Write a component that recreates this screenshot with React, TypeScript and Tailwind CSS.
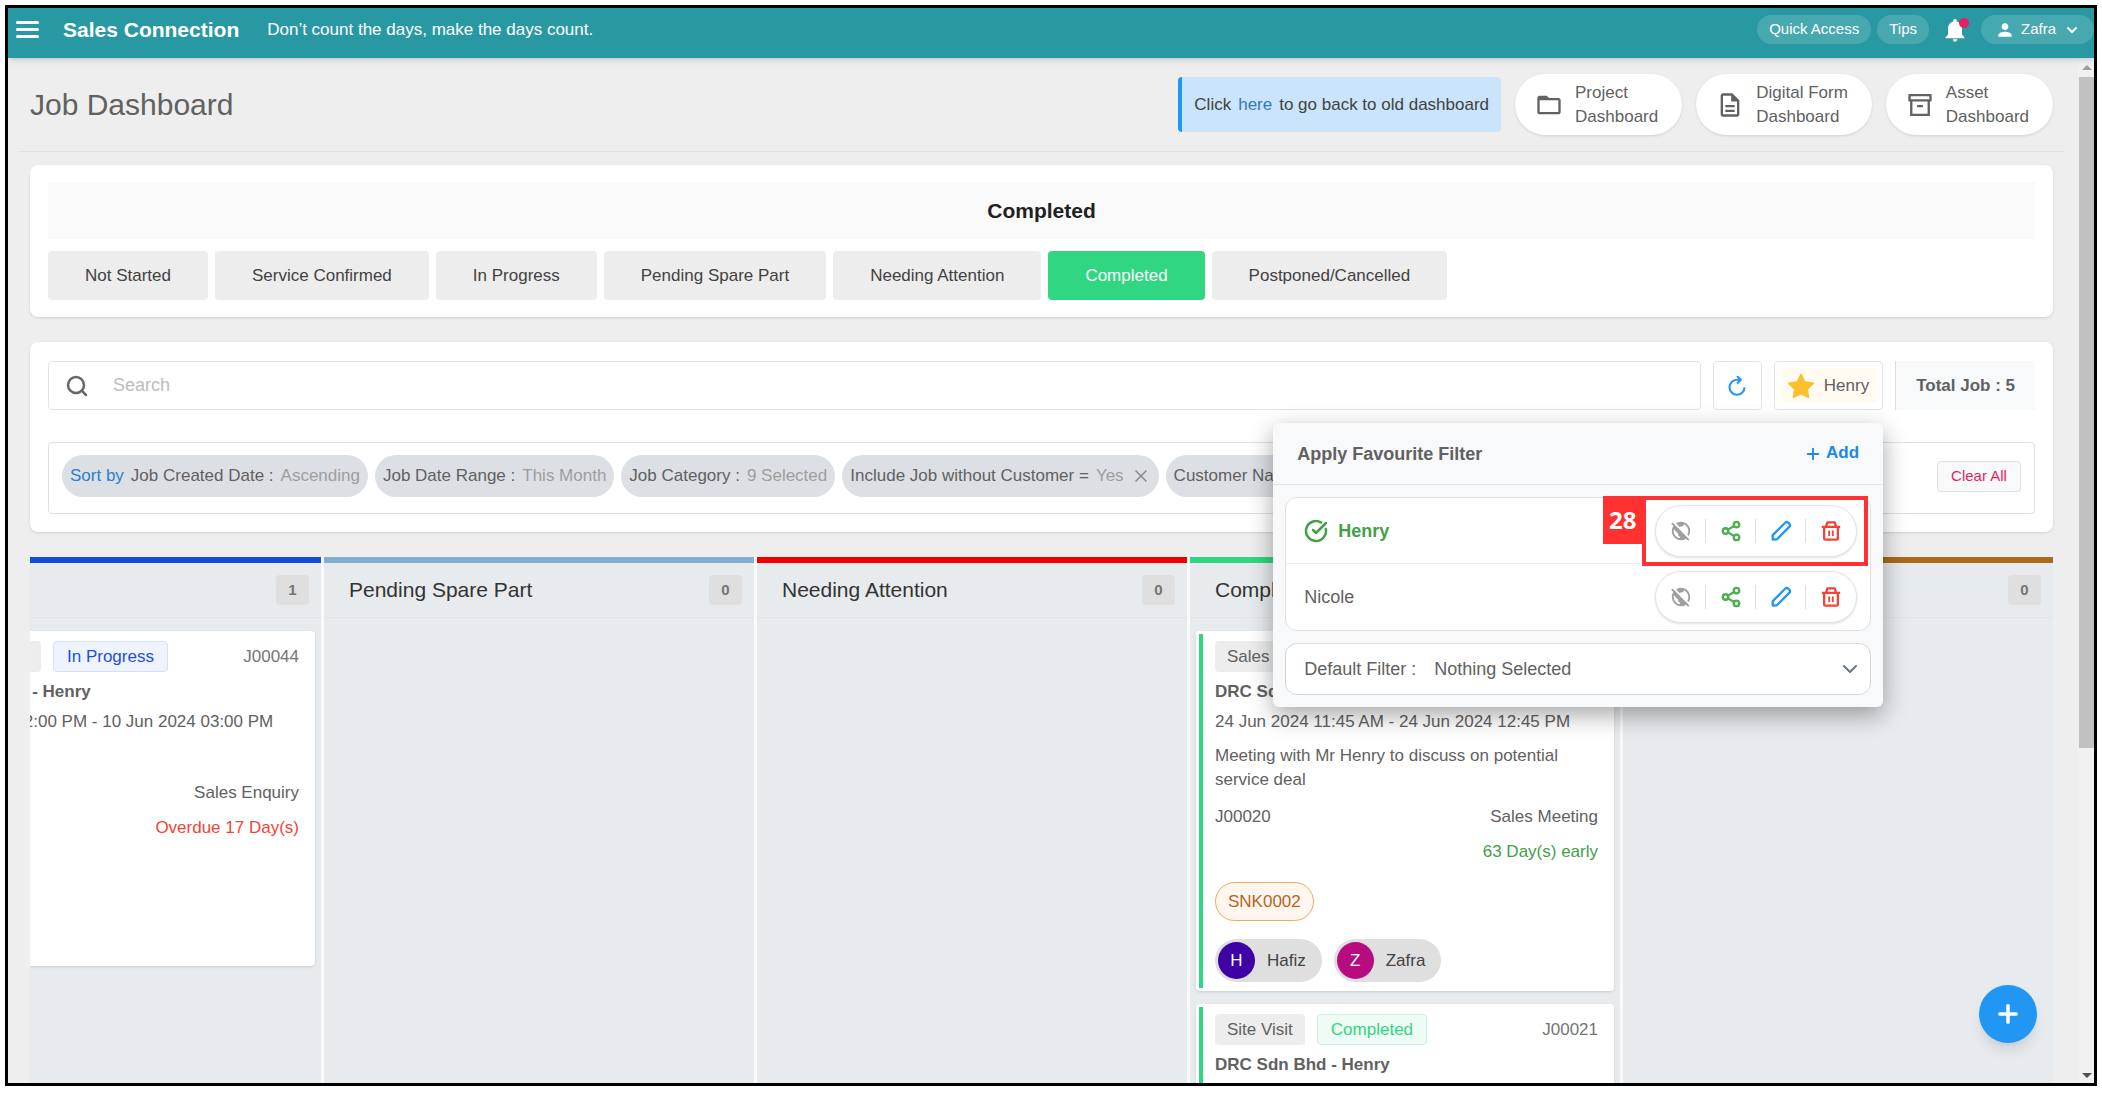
import type { ReactNode } from "react";
import { BsStarFill } from "react-icons/bs";
import {
  MdFolderOpen,
  MdNotifications,
  MdOutlineDescription,
  MdPerson,
  MdPublicOff,
} from "react-icons/md";
import { ChevronDown, CircleCheckBig, Plus, Search, Share2, X } from "lucide-react";

interface IJob {
  code: string;
  category: string;
  status: string;
  statusClass: string;
  customer: string;
  date?: string;
  description?: string;
  type?: string;
  timing?: string;
  timingClass?: string;
  asset?: string;
  staff?: { name: string; color: string }[];
  codeBelow?: boolean;
  accent?: string;
}

interface IColumn {
  name: string;
  count: number;
  bar: string;
  jobs: IJob[];
}

const STATUSES = [
  "Not Started",
  "Service Confirmed",
  "In Progress",
  "Pending Spare Part",
  "Needing Attention",
  "Completed",
  "Postponed/Cancelled",
];

const COLUMNS: IColumn[] = [
  {
    name: "",
    count: 1,
    bar: "border-[#1449dc]",
    jobs: [
      {
        code: "J00044",
        category: "",
        status: "In Progress",
        statusClass: "border-[#d6e0fb] bg-[#eef3fe] text-[#1f4fdc]",
        customer: "DRC Sdn Bhd - Henry",
        date: "10 Jun 2024 02:00 PM - 10 Jun 2024 03:00 PM",
        type: "Sales Enquiry",
        timing: "Overdue 17 Day(s)",
        timingClass: "text-[#f44336]",
      },
    ],
  },
  { name: "Pending Spare Part", count: 0, bar: "border-[#85adcf]", jobs: [] },
  { name: "Needing Attention", count: 0, bar: "border-[#f00000]", jobs: [] },
  {
    name: "Completed",
    count: 4,
    bar: "border-[#31d683]",
    jobs: [
      {
        code: "J00020",
        category: "Sales Meeting",
        status: "Completed",
        statusClass: "border-[#c9f3dd] bg-[#effbf5] text-[#31d683]",
        customer: "DRC Sdn Bhd - Henry",
        date: "24 Jun 2024 11:45 AM - 24 Jun 2024 12:45 PM",
        description: "Meeting with Mr Henry to discuss on potential service deal",
        type: "Sales Meeting",
        timing: "63 Day(s) early",
        timingClass: "text-[#43a047]",
        asset: "SNK0002",
        staff: [
          { name: "Hafiz", color: "bg-[#3f00a6]" },
          { name: "Zafra", color: "bg-[#b90b80]" },
        ],
        codeBelow: true,
        accent: "border-[#31d683]",
      },
      {
        code: "J00021",
        category: "Site Visit",
        status: "Completed",
        statusClass: "border-[#c9f3dd] bg-[#effbf5] text-[#31d683]",
        customer: "DRC Sdn Bhd - Henry",
        accent: "border-[#31d683]",
      },
    ],
  },
  { name: "", count: 0, bar: "border-[#ab6a18]", jobs: [] },
];

function ArchiveIcon() {
  return (
    <svg viewBox="0 0 24 24" className="size-7 fill-none stroke-current stroke-2">
      <path d="M3 3.500h18v4.500H3z" strokeLinejoin="round" />
      <path d="M4.500 8v12.500h15V8M9.500 13h5" strokeLinejoin="round" />
    </svg>
  );
}

function ReloadIcon() {
  return (
    <svg viewBox="0 0 24 24" className="size-5 fill-none stroke-[#2196f3] stroke-[2.500]">
      <path d="M21 13.500a9 9 0 1 1-9-9h4" />
      <path d="M12 0l4.500 4.500L12 9" />
    </svg>
  );
}

function PencilIcon() {
  return (
    <svg viewBox="0 0 24 24" className="size-[22px] fill-none stroke-[#2196f3] stroke-[2.500]">
      <path
        d="M3 21.500v-5L16.500 3a2.500 2.500 0 0 1 3.500 0l1 1a2.500 2.500 0 0 1 0 3.500L7.500 21z"
        strokeLinejoin="round"
      />
    </svg>
  );
}

function BinIcon() {
  return (
    <svg viewBox="0 0 24 24" className="size-[22px] fill-none stroke-[#f44336] stroke-[2.500]">
      <path d="M2 7.500h20M6.500 7.500l1.500-5h8l1.500 5" strokeLinejoin="round" />
      <path d="M4.500 7.500V20a1.500 1.500 0 0 0 1.500 1.500h12a1.500 1.500 0 0 0 1.500-1.500V7.500" />
      <path d="M10 11.500v6M14 11.500v6" strokeWidth="2" />
    </svg>
  );
}

function TopBar() {
  return (
    <header className="relative z-10 flex h-[50px] items-center bg-[#2899a3] pb-[7px] pl-2 text-white shadow-md">
      <button type="button" aria-label="Menu" className="flex w-[23px] flex-col gap-1">
        <span className="h-[3px] rounded-full bg-white" />
        <span className="h-[3px] rounded-full bg-white" />
        <span className="h-[3px] rounded-full bg-white" />
      </button>
      <strong className="ml-6 text-[21px]">Sales Connection</strong>
      <span className="ml-7 text-[17px]">Don’t count the days, make the days count.</span>
      <div className="ml-auto flex items-center gap-1.5 text-[15px]">
        <button type="button" className="h-[29px] rounded-full bg-white/15 px-3">
          Quick Access
        </button>
        <button type="button" className="h-[29px] rounded-full bg-white/15 px-3">
          Tips
        </button>
        <button type="button" aria-label="Notifications" className="relative mx-1.5">
          <MdNotifications className="size-7" />
          <span className="absolute right-0 top-0.5 size-2.5 rounded-full bg-[#e91e63]" />
        </button>
        <button type="button" className="flex h-[29px] items-center rounded-full bg-white/15 px-3.5">
          <MdPerson className="mr-1.5 size-5" />
          Zafra
          <ChevronDown className="ml-2 size-4" strokeWidth={3} />
        </button>
      </div>
    </header>
  );
}

function DashboardLink({ icon, label }: Readonly<{ icon: ReactNode; label: string }>) {
  return (
    <a
      href="#"
      className="flex h-[61px] items-center gap-3 rounded-full bg-white pl-5 pr-6 leading-6 shadow-sm"
    >
      {icon}
      <span>
        {label}
        <br />
        Dashboard
      </span>
    </a>
  );
}

function TitleRow() {
  return (
    <div className="flex h-[93px] items-center pl-[22px]">
      <h1 className="text-[30px]">Job Dashboard</h1>
      <div className="ml-auto flex items-center gap-3.5">
        <p className="flex h-[55px] items-center rounded-sm border-l-4 border-[#2196f3] bg-[#cae5fb] px-3 text-[#424242]">
          Click
          <a href="#" className="mx-[7px] text-[#337ab7]">
            here
          </a>
          to go back to old dashboard
        </p>
        <DashboardLink icon={<MdFolderOpen className="size-7" />} label="Project" />
        <DashboardLink icon={<MdOutlineDescription className="size-7" />} label="Digital Form" />
        <DashboardLink icon={<ArchiveIcon />} label="Asset" />
      </div>
    </div>
  );
}

function StatusPanel() {
  return (
    <section className="rounded-lg bg-white px-[18px] py-[17px] shadow">
      <h2 className="flex h-[57px] items-center justify-center bg-[#fafafa] text-[21px] font-bold text-[#212121]">
        Completed
      </h2>
      <div className="mt-3 flex gap-[7px]">
        {STATUSES.map((status) => (
          <button
            key={status}
            type="button"
            className={`h-[49px] rounded px-[37px] ${
              status === "Completed" ? "bg-[#31d683] text-white" : "bg-[#ededed] text-[#424242]"
            }`}
          >
            {status}
          </button>
        ))}
      </div>
    </section>
  );
}

function Chip({ children }: Readonly<{ children: ReactNode }>) {
  return (
    <span className="flex h-[42px] shrink-0 items-center gap-[7px] rounded-full bg-[#dce0e4] px-2">
      {children}
    </span>
  );
}

function RowAction({ label, children }: Readonly<{ label: string; children: ReactNode }>) {
  return (
    <button type="button" aria-label={label} className="flex h-6 w-[50px] items-center justify-center">
      {children}
    </button>
  );
}

function RowActions({ name }: Readonly<{ name: string }>) {
  return (
    <div className="flex h-[52px] items-center divide-x divide-[#e0e0e0] rounded-full border border-[#e4e4e4] bg-white shadow">
      <RowAction label={`Hide ${name}`}>
        <MdPublicOff className="size-[22px] text-[#9e9e9e]" />
      </RowAction>
      <RowAction label={`Share ${name}`}>
        <Share2 className="size-[22px] text-[#4caf50]" strokeWidth={2.5} />
      </RowAction>
      <RowAction label={`Edit ${name}`}>
        <PencilIcon />
      </RowAction>
      <RowAction label={`Delete ${name}`}>
        <BinIcon />
      </RowAction>
    </div>
  );
}

function FavouriteMenu() {
  return (
    <div className="absolute right-0 top-[62px] z-20 w-[610px] rounded-md bg-[#f7f9fb] text-lg shadow-[0_8px_24px_rgba(0,0,0,0.35)]">
      <div className="flex h-[62px] items-center justify-between border-b border-[#e4e7ea] px-6">
        <h3 className="font-bold">Apply Favourite Filter</h3>
        <button type="button" className="flex items-center gap-1 text-[17px] font-bold text-[#1e88e5]">
          <Plus className="size-[18px]" strokeWidth={2.5} />
          Add
        </button>
      </div>
      <div className="flex flex-col gap-3 p-3">
        <ul className="relative rounded-xl border border-[#e0e0e0] bg-white">
          <li className="flex h-[66px] items-center justify-between border-b border-[#eeeeee] pl-[18px] pr-[13px]">
            <span className="flex items-center gap-2.5 font-bold text-[#43a047]">
              <CircleCheckBig className="size-6" strokeWidth={2.5} />
              Henry
            </span>
            <RowActions name="Henry" />
          </li>
          <li className="flex h-[66px] items-center justify-between pl-[18px] pr-[13px]">
            Nicole
            <RowActions name="Nicole" />
          </li>
          <li aria-hidden="true" className="absolute right-0.5 top-[-2px] flex items-start">
            <span className="flex h-12 w-[39px] items-center justify-center bg-[#ff3131] font-['Open_Sans',sans-serif] text-2xl font-bold text-white">
              28
            </span>
            <span className="h-[70px] w-[226px] border-4 border-[#ff3131]" />
          </li>
        </ul>
        <div className="relative flex h-[52px] items-center rounded-xl border border-[#d5d9dd] bg-white pl-[18px]">
          <label htmlFor="default-filter" className="mr-[18px] shrink-0">
            Default Filter :
          </label>
          <select id="default-filter" className="h-full flex-1 appearance-none bg-transparent">
            <option>Nothing Selected</option>
          </select>
          <ChevronDown className="pointer-events-none absolute right-2 size-6 text-[#6c757d]" />
        </div>
      </div>
    </div>
  );
}

function FilterPanel() {
  return (
    <section className="rounded-lg bg-white px-[18px] pb-[18px] pt-[19px] shadow">
      <div className="flex h-[49px] gap-3">
        <div className="flex flex-1 items-center rounded border border-[#e4e4e4] pl-4">
          <Search className="size-6 text-[#666666]" strokeWidth={2.5} />
          <input
            type="search"
            aria-label="Search"
            placeholder="Search"
            className="ml-6 h-full flex-1 text-lg outline-none placeholder:text-[#bdbdbd]"
          />
        </div>
        <button
          type="button"
          aria-label="Refresh"
          className="flex w-[49px] items-center justify-center rounded border border-[#e4e4e4]"
        >
          <ReloadIcon />
        </button>
        <div className="relative flex">
          <button type="button" className="rounded border border-[#e4e4e4] p-1.5">
            <span className="flex h-full items-center gap-2.5 bg-[#fffbf0] px-[7px]">
              <BsStarFill className="size-[26px] text-[#fbc02d]" />
              Henry
            </span>
          </button>
          <FavouriteMenu />
        </div>
        <div className="flex items-center border-l border-[#dddddd] bg-[#f7f9fb] px-5 font-bold">
          Total Job : 5
        </div>
      </div>
      <div className="mt-8 flex h-[72px] items-center gap-[7px] rounded border border-[#e0e0e0] px-[13px] pb-1">
        <Chip>
          <span className="text-[#2a7fd0]">Sort by</span>
          <span>Job Created Date :</span>
          <span className="text-[#9e9e9e]">Ascending</span>
        </Chip>
        <Chip>
          <span>Job Date Range :</span>
          <span className="text-[#9e9e9e]">This Month</span>
        </Chip>
        <Chip>
          <span>Job Category :</span>
          <span className="text-[#9e9e9e]">9 Selected</span>
        </Chip>
        <Chip>
          <span>Include Job without Customer =</span>
          <span className="text-[#9e9e9e]">Yes</span>
          <button type="button" aria-label="Remove filter">
            <X className="size-5 text-[#8c8c8c]" />
          </button>
        </Chip>
        <Chip>
          <span>Customer Name :</span>
        </Chip>
        <button
          type="button"
          className="ml-auto h-[31px] w-[84px] shrink-0 rounded border border-[#e0e0e0] bg-[#f7f9fb] text-[15px] text-[#e91e63]"
        >
          Clear All
        </button>
      </div>
    </section>
  );
}

function JobCard({ job }: Readonly<{ job: IJob }>) {
  return (
    <article className="min-h-[335px] rounded bg-white p-[3px] shadow">
      <div className={`h-full border-l-4 pb-1.5 pl-3 pr-[13px] pt-[7px] ${job.accent ?? "border-transparent"}`}>
        <div className="flex h-[31px] items-center gap-3">
          <span className={`h-full rounded bg-[#ededed] px-3 leading-[31px] ${job.category ? "" : "w-[125px]"}`}>
            {job.category}
          </span>
          <span className={`h-full rounded border px-[13px] leading-[29px] ${job.statusClass}`}>{job.status}</span>
          {!job.codeBelow && <span className="ml-auto text-[#757575]">{job.code}</span>}
        </div>
        <h4 className="mt-2 font-bold leading-6">{job.customer}</h4>
        <p className="mt-1.5 leading-6">{job.date}</p>
        <p className="mt-2.5 min-h-6 leading-6">{job.description}</p>
        <div className="mt-[13px] flex justify-between leading-6">
          <span>{job.codeBelow && job.code}</span>
          <span>{job.type}</span>
        </div>
        <p className={`mt-[11px] text-right leading-6 ${job.timingClass ?? ""}`}>{job.timing}</p>
        {job.asset && (
          <span className="mt-[18px] inline-flex h-[39px] items-center rounded-full border border-[#f5a855] bg-[#fff6f0] px-3 text-[#b5651d]">
            {job.asset}
          </span>
        )}
        {job.staff && (
          <div className="mt-[18px] flex gap-3">
            {job.staff.map((person) => (
              <span key={person.name} className="flex h-[43px] items-center gap-3 rounded-full bg-[#dfdfdf] pl-[3px] pr-4">
                <span className={`flex size-[37px] items-center justify-center rounded-full text-white ${person.color}`}>
                  {person.name[0]}
                </span>
                <span className="text-[#424242]">{person.name}</span>
              </span>
            ))}
          </div>
        )}
      </div>
    </article>
  );
}

function Board() {
  return (
    <section className="flex flex-1 justify-end gap-[3px] overflow-hidden bg-[#fafafa]">
      {COLUMNS.map((column) => (
        <div key={column.bar} className={`w-[430px] shrink-0 border-t-[6px] bg-[#e7ebee] ${column.bar}`}>
          <div className="flex h-[55px] items-center justify-between border-b border-[#e2e5e8] pl-[25px] pr-3">
            <h3 className="text-[21px] text-[#333333]">{column.name}</h3>
            <span className="flex h-[30px] w-[33px] items-center justify-center rounded bg-[#dfdfdf] text-[15px] font-bold text-[#757575]">
              {column.count}
            </span>
          </div>
          <div className="flex flex-col gap-[13px] px-1.5 pt-[13px]">
            {column.jobs.map((job) => (
              <JobCard key={job.code} job={job} />
            ))}
          </div>
        </div>
      ))}
    </section>
  );
}

export default function App() {
  return (
    <div className="h-screen bg-white px-[5px] pb-[9px] pt-[5px] font-['Liberation_Sans',Arial,sans-serif] text-[17px] text-[#616161]">
      <div className="relative flex h-full flex-col overflow-hidden border-[3px] border-black bg-[#eeeeee]">
        <TopBar />
        <div className="flex min-h-0 flex-1">
          <main className="flex min-w-0 flex-1 flex-col pr-[26px]">
            <TitleRow />
            <div className="ml-[10px] mr-[-12px] border-t border-[#e2e2e2]" />
            <div className="flex min-h-0 flex-1 flex-col gap-[25px] pl-[22px] pt-[13px]">
              <StatusPanel />
              <FilterPanel />
              <Board />
            </div>
          </main>
          <div aria-hidden="true" className="flex w-[15px] flex-col items-center bg-[#f1f1f1]">
            <span className="my-[7px] border-x-[5px] border-b-[5px] border-x-transparent border-b-[#9e9e9e]" />
            <span className="w-full flex-[21_0_0] bg-[#c1c1c1]" />
            <span className="flex-[10_0_0]" />
            <span className="my-[5px] border-x-[5px] border-t-[5px] border-x-transparent border-t-[#505050]" />
          </div>
        </div>
        <button
          type="button"
          aria-label="Add job"
          className="absolute bottom-10 right-[57px] flex size-[58px] items-center justify-center rounded-full bg-[#2196f3] text-white shadow-lg"
        >
          <Plus className="size-7" strokeWidth={3} />
        </button>
      </div>
    </div>
  );
}
